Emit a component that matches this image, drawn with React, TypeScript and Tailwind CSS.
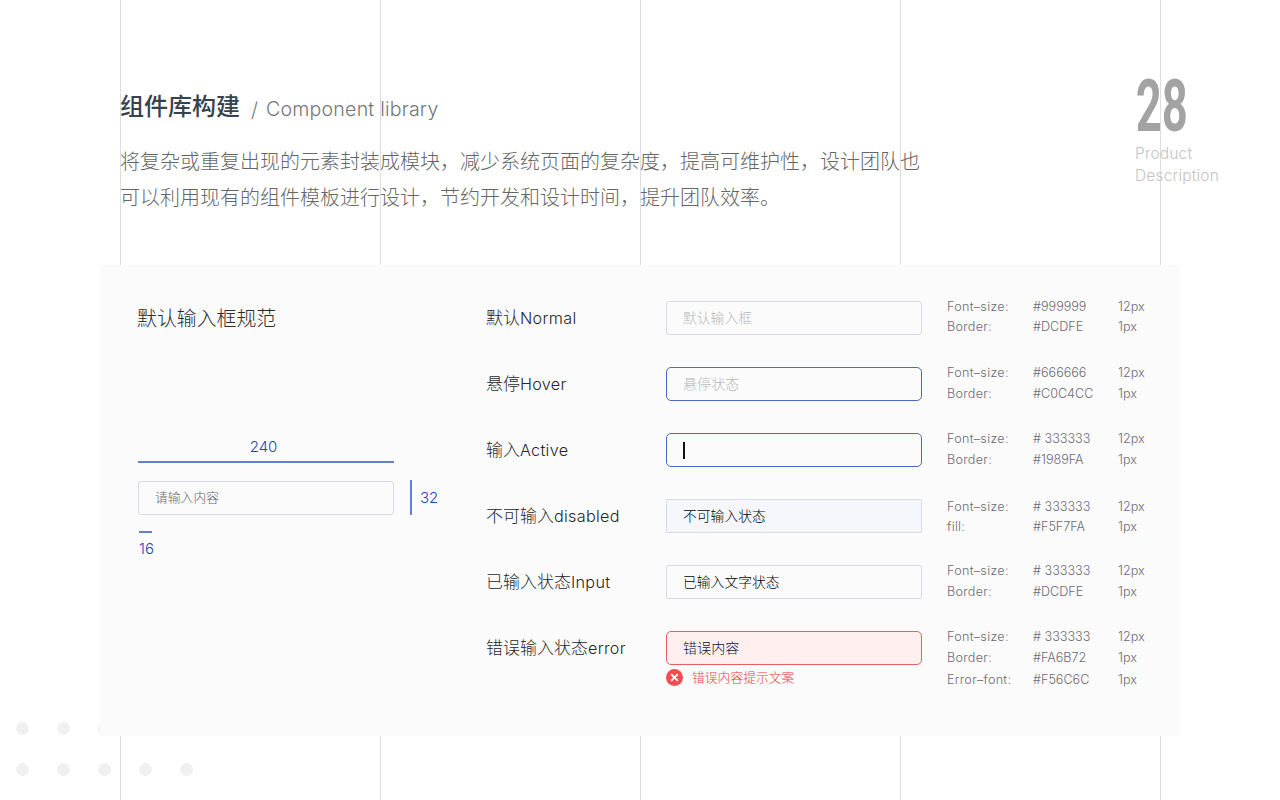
import clsx from "clsx";

interface Spec {
  label: string;
  value: string;
  size: string;
}

interface State {
  name: string;
  latin: string;
  text: string;
  box: string;
  nudge?: string;
  tight?: boolean;
  cursor?: boolean;
  error?: string;
  specs: Spec[];
}

const states: State[] = [
  {
    name: "默认",
    latin: "Normal",
    text: "默认输入框",
    tight: true,
    box: "rounded-[3px] border-[#d8dbe2] text-[13.8px] text-[#b8b8ba] font-light",
    specs: [
      { label: "Font–size:", value: "#999999", size: "12px" },
      { label: "Border:", value: "#DCDFE", size: "1px" },
    ],
  },
  {
    name: "悬停",
    latin: "Hover",
    text: "悬停状态",
    box: "rounded-[5px] border-[#4a69c8] text-[14.1px] text-[#b8b8ba] font-light",
    specs: [
      { label: "Font–size:", value: "#666666", size: "12px" },
      { label: "Border:", value: "#C0C4CC", size: "1px" },
    ],
  },
  {
    name: "输入",
    latin: "Active",
    text: "",
    cursor: true,
    box: "rounded-[5px] border-[#4a69c8]",
    specs: [
      { label: "Font–size:", value: "# 333333", size: "12px" },
      { label: "Border:", value: "#1989FA", size: "1px" },
    ],
  },
  {
    name: "不可输入",
    latin: "disabled",
    text: "不可输入状态",
    nudge: "pt-[2px]",
    tight: true,
    box: "rounded-[2px] border-[#d8dbe2] bg-[#f5f7fc] text-[13.8px] text-black font-light",
    specs: [
      { label: "Font–size:", value: "# 333333", size: "12px" },
      { label: "fill:", value: "#F5F7FA", size: "1px" },
    ],
  },
  {
    name: "已输入状态",
    latin: "Input",
    text: "已输入文字状态",
    box: "rounded-[2px] border-[#d8dbe2] text-[13.8px] text-black font-light",
    specs: [
      { label: "Font–size:", value: "# 333333", size: "12px" },
      { label: "Border:", value: "#DCDFE", size: "1px" },
    ],
  },
  {
    name: "错误输入状态",
    latin: "error",
    text: "错误内容",
    box: "rounded-[5px] border-[#e8605f] bg-[#fff0ef] text-[14.1px] text-[#0a1434] font-light",
    error: "错误内容提示文案",
    specs: [
      { label: "Font–size:", value: "# 333333", size: "12px" },
      { label: "Border:", value: "#FA6B72", size: "1px" },
      { label: "Error–font:", value: "#F56C6C", size: "1px" },
    ],
  },
];

const columns = ["c1", "c2", "c3", "c4", "c5"];
const dots = ["d1", "d2", "d3", "d4", "d5"];

function Backdrop() {
  return (
    <div className="absolute inset-0">
      <div className="flex h-full pl-[120px]">
        {columns.map((c) => (
          <div key={c} className="w-[260px] shrink-0 border-l border-[#dedede]" />
        ))}
      </div>
      <div className="absolute left-4 top-[722px] flex flex-col gap-7">
        {[3, 5].map((count) => (
          <div key={count} className="flex gap-7">
            {dots.slice(0, count).map((d) => (
              <span key={d} className="size-[13px] rounded-full bg-[#f0f0f0]" />
            ))}
          </div>
        ))}
      </div>
    </div>
  );
}

function Header() {
  return (
    <header className="relative flex h-[265px] justify-between pl-[120px]">
      <div className="pt-[90px]">
        <h1 className="flex h-9 items-center whitespace-nowrap">
          <span className="-mt-[3px] text-[24px] font-medium text-[#36424c]">组件库构建</span>
          <span className="ml-[11px] mt-1 text-[20px] font-light text-[#7b7b7b]">/</span>
          <span className="ml-[8px] mt-1 text-[19.6px] font-light tracking-[0.2px] text-[#777]">
            Component library
          </span>
        </h1>
        <p className="mt-[18px] w-[810px] text-[20px] font-light leading-[36px] text-[#666]">
          将复杂或重复出现的元素封装成模块，减少系统页面的复杂度，提高可维护性，设计团队也
          <br />
          可以利用现有的组件模板进行设计，节约开发和设计时间，提升团队效率。
        </p>
      </div>
      <div className="w-[145px] pt-[80px]">
        <div className="h-[53px] origin-left scale-x-[0.63] pl-px font-['Roboto'] text-[72px] font-bold leading-[53px] text-[#a3a3a3]">
          28
        </div>
        <div className="mt-[10px] text-[15.5px] font-light leading-[22px] tracking-[0.18px] text-[#c4c4c4]">
          Product
          <br />
          Description
        </div>
      </div>
    </header>
  );
}

function Measure() {
  return (
    <div className="w-[348px] pt-[36px] text-[15px] text-[#2346b8]">
      <h2 className="-ml-px h-9 text-[19.9px] font-light leading-9 text-[#2b2b2b]">默认输入框规范</h2>
      <div className="mt-[100px] w-[256px] pr-[5px] text-center font-light leading-5">240</div>
      <div className="mt-[4px] h-[2px] w-[256px] bg-[#6580d2]" />
      <div className="mt-[17px] flex items-center">
        <div className="flex h-[34px] w-[256px] items-center rounded-[3px] border border-[#d8dbe2] pl-4 text-[12.8px] font-light text-[#66676c]">
          请输入内容
        </div>
        <div className="ml-4 h-[35px] w-[2px] bg-[#6580d2]" />
        <span className="ml-2 mt-px font-light">32</span>
      </div>
      <div className="ml-px mt-[16px] h-[2px] w-[13px] bg-[#6580d2]" />
      <div className="ml-px mt-[6px] font-light leading-5">16</div>
    </div>
  );
}

function ErrorIcon() {
  return (
    <svg viewBox="0 0 17 17" className="size-[17px]">
      <circle cx="8.5" cy="8.5" r="8.5" fill="#fb4b4f" />
      <path d="M5.2 5.2l6.6 6.6M11.8 5.2l-6.6 6.6" stroke="#fff" strokeWidth="1.8" />
    </svg>
  );
}

function StateRow({ state }: { state: State }) {
  return (
    <div className="flex h-[66px]">
      <div className="w-[180px] whitespace-nowrap text-[17px] font-light leading-[35px] text-[#26272c]">
        {state.name}
        <span className="text-[16.2px] tracking-[0.3px]">{state.latin}</span>
      </div>
      <div className="w-[281px]">
        <div className={clsx("flex h-[34px] w-[256px] items-center border pl-4", state.box)}>
          {state.cursor && <span className="h-[17px] w-[1.5px] bg-[#111]" />}
          {state.text}
        </div>
        {state.error && (
          <div className="mt-[4px] flex items-center gap-[9px] text-[12.8px] font-light leading-[17px] text-[#f93a3c]">
            <ErrorIcon />
            {state.error}
          </div>
        )}
      </div>
      <div className={clsx("-mt-[5px]", state.nudge)}>
        {state.specs.map((spec, i) => (
          <div
            key={spec.label}
            className={clsx(
              "grid grid-cols-[86px_85px_60px] whitespace-nowrap text-[12.6px] font-light leading-[21px] text-[#6c6c75]",
              state.tight ? "h-5" : "h-[20.5px]",
              i === 2 && "mt-[2px]",
            )}
          >
            <span className="tracking-[0.3px]">{spec.label}</span>
            <span>{spec.value}</span>
            <span>{spec.size}</span>
          </div>
        ))}
      </div>
    </div>
  );
}

export default function App() {
  return (
    <div className="relative h-[800px] w-[1280px] overflow-hidden bg-white font-['Inter','Noto_Sans_CJK_SC',sans-serif]">
      <Backdrop />
      <Header />
      <main className="relative ml-[100px] flex h-[471px] w-[1080px] bg-[#fbfbfb] pl-[38px]">
        <Measure />
        <div className="pt-[36px]">
          {states.map((state) => (
            <StateRow key={state.latin} state={state} />
          ))}
        </div>
      </main>
    </div>
  );
}
